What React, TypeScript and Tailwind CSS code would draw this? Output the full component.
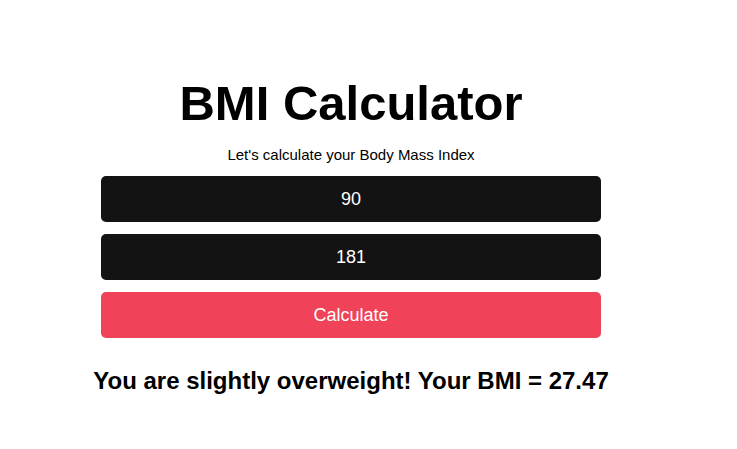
import React, { useState } from 'react';

const App = () => {
  const [peso, setPeso] = useState('90');
  const [altura, setAltura] = useState('181');
  const [bmi, setBmi] = useState(27.47);

  const calcular = () => {
    const h = Number(altura) / 100;
    const v = Number(peso) / (h * h);
    setBmi(Math.round(v * 100) / 100);
  };

  return (
    <div className="min-h-screen bg-white font-['Liberation_Sans',Arial,sans-serif] text-black">
      <div className="w-[702px] flex flex-col items-center pt-[75px]">
        <h1 className="text-[49px] leading-[56px] font-bold">BMI Calculator</h1>
        <p className="mt-[15px] text-[15px] leading-[18px]">Let's calculate your Body Mass Index</p>

        <div className="mt-[12px] w-[500px] flex flex-col gap-3">
          <input
            value={peso}
            onChange={(e) => setPeso(e.target.value)}
            className="h-[46px] w-full rounded-[5px] bg-[#131313] text-white text-center text-[18px] outline-none"
          />
          <input
            value={altura}
            onChange={(e) => setAltura(e.target.value)}
            className="h-[46px] w-full rounded-[5px] bg-[#131313] text-white text-center text-[18px] outline-none"
          />
          <button
            onClick={calcular}
            className="h-[46px] w-full rounded-[5px] bg-[#f04359] text-white text-[18px]"
          >
            Calculate
          </button>
        </div>

        <p className="mt-[29px] text-[24px] leading-[28px] font-bold">
          You are slightly overweight! Your BMI = {bmi}
        </p>
      </div>
    </div>
  );
};

export default App;
